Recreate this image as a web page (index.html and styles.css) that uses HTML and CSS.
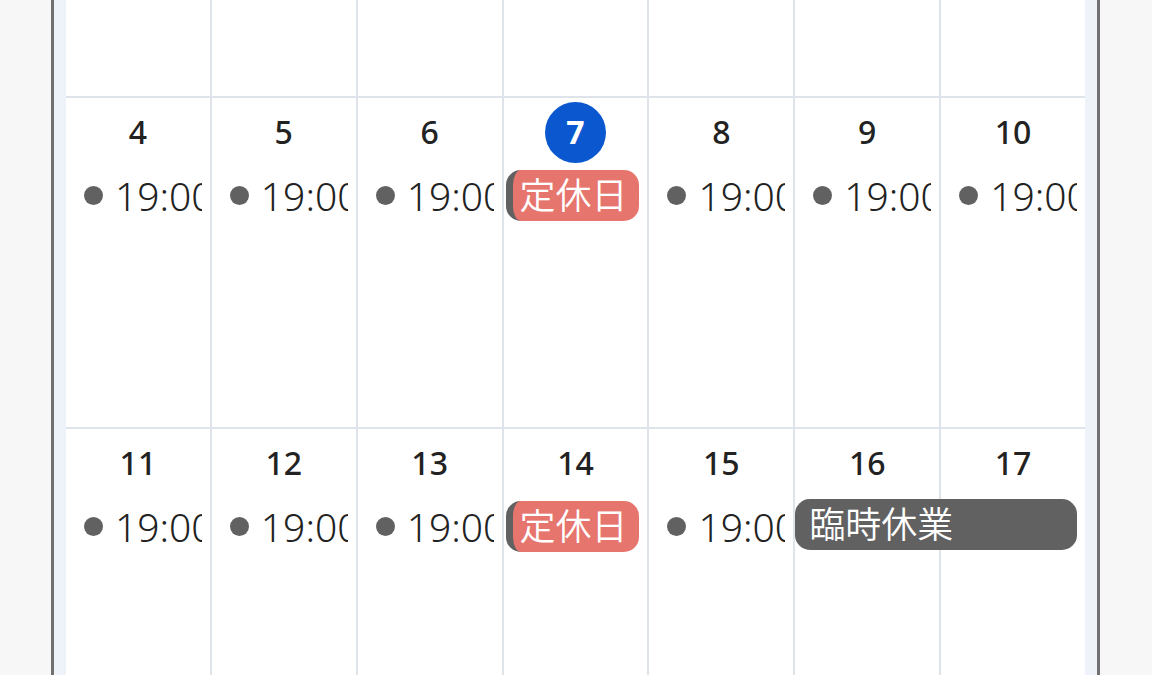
FILE: index.html
```html
<!DOCTYPE html>
<html lang="ja">
<head>
<meta charset="utf-8">
<title>Calendar</title>
<link rel="stylesheet" href="styles.css">
</head>
<body>
<div class="frame">
  <div class="month">
    <div class="cell"></div>
    <div class="cell"></div>
    <div class="cell"></div>
    <div class="cell"></div>
    <div class="cell"></div>
    <div class="cell"></div>
    <div class="cell"></div>

    <div class="cell"><div class="day"><span class="num">4</span></div><div class="ev timed"><span class="dot"></span><span class="time">19:00</span></div></div>
    <div class="cell"><div class="day"><span class="num">5</span></div><div class="ev timed"><span class="dot"></span><span class="time">19:00</span></div></div>
    <div class="cell"><div class="day"><span class="num">6</span></div><div class="ev timed"><span class="dot"></span><span class="time">19:00</span></div></div>
    <div class="cell"><div class="day"><span class="num today">7</span></div><div class="ev badge red">定休日</div></div>
    <div class="cell"><div class="day"><span class="num">8</span></div><div class="ev timed"><span class="dot"></span><span class="time">19:00</span></div></div>
    <div class="cell"><div class="day"><span class="num">9</span></div><div class="ev timed"><span class="dot"></span><span class="time">19:00</span></div></div>
    <div class="cell"><div class="day"><span class="num">10</span></div><div class="ev timed"><span class="dot"></span><span class="time">19:00</span></div></div>

    <div class="cell"><div class="day"><span class="num">11</span></div><div class="ev timed"><span class="dot"></span><span class="time">19:00</span></div></div>
    <div class="cell"><div class="day"><span class="num">12</span></div><div class="ev timed"><span class="dot"></span><span class="time">19:00</span></div></div>
    <div class="cell"><div class="day"><span class="num">13</span></div><div class="ev timed"><span class="dot"></span><span class="time">19:00</span></div></div>
    <div class="cell"><div class="day"><span class="num">14</span></div><div class="ev badge red">定休日</div></div>
    <div class="cell"><div class="day"><span class="num">15</span></div><div class="ev timed"><span class="dot"></span><span class="time">19:00</span></div></div>
    <div class="cell col6"><div class="day"><span class="num">16</span></div></div>
    <div class="cell col7"><div class="day"><span class="num">17</span></div></div>

    <div class="span-ev ev badge gray">臨時休業</div>
  </div>
</div>
</body>
</html>
```

FILE: styles.css
```css
html, body {
  margin: 0;
  padding: 0;
}
body {
  background: #f7f7f7;
  height: 675px;
  overflow: hidden;
  font-family: "Noto Sans", "Noto Sans CJK JP", sans-serif;
  color: #222;
}
.frame {
  margin-left: 51px;
  width: 1019px;
  border-left: 3px solid #717171;
  border-right: 3px solid #717171;
  padding: 0 12px;
  background: #eef2f9;
  height: 675px;
}
.month {
  display: grid;
  grid-template-columns: repeat(7, 1fr);
  grid-template-rows: 96px 329px 246px;
  gap: 2px;
  background: #dfe3ea;
}
.cell {
  background: #fff;
  min-width: 0;
  min-height: 0;
  display: flex;
  flex-direction: column;
}
.col6 {
  grid-row: 3;
  grid-column: 6;
}
.col7 {
  grid-row: 3;
  grid-column: 7;
}
.day {
  height: 42px;
  margin-top: 13px;
  display: flex;
  justify-content: center;
  align-items: center;
}
.num {
  font-size: 32px;
  font-weight: 500;
  line-height: 42px;
}
.num.today {
  flex: none;
  width: 61px;
  height: 61px;
  border-radius: 50%;
  background: #0b57d0;
  color: #fff;
  font-weight: 700;
  display: flex;
  align-items: center;
  justify-content: center;
}
.ev {
  margin: 17px 8px 0 2px;
  height: 51px;
  display: flex;
  align-items: center;
  white-space: nowrap;
  overflow: hidden;
  box-sizing: border-box;
}
.timed {
  padding-left: 16px;
}
.dot {
  flex: none;
  width: 19px;
  height: 19px;
  border-radius: 50%;
  background: #616161;
  margin-right: 12px;
}
.time {
  font-size: 39px;
  font-weight: 350;
  line-height: 48px;
  color: #222;
}
.badge {
  border-radius: 15px;
  border-left: 7px solid #616161;
  padding-left: 7px;
  color: #fff;
  font-size: 36px;
  font-weight: 350;
  line-height: 51px;
}
.red {
  background: #e6756e;
}
.gray {
  background: #616161;
}
.span-ev {
  grid-row: 3;
  grid-column: 6 / 8;
  align-self: start;
  margin-top: 70px;
  margin-left: 0;
  z-index: 1;
}
```
